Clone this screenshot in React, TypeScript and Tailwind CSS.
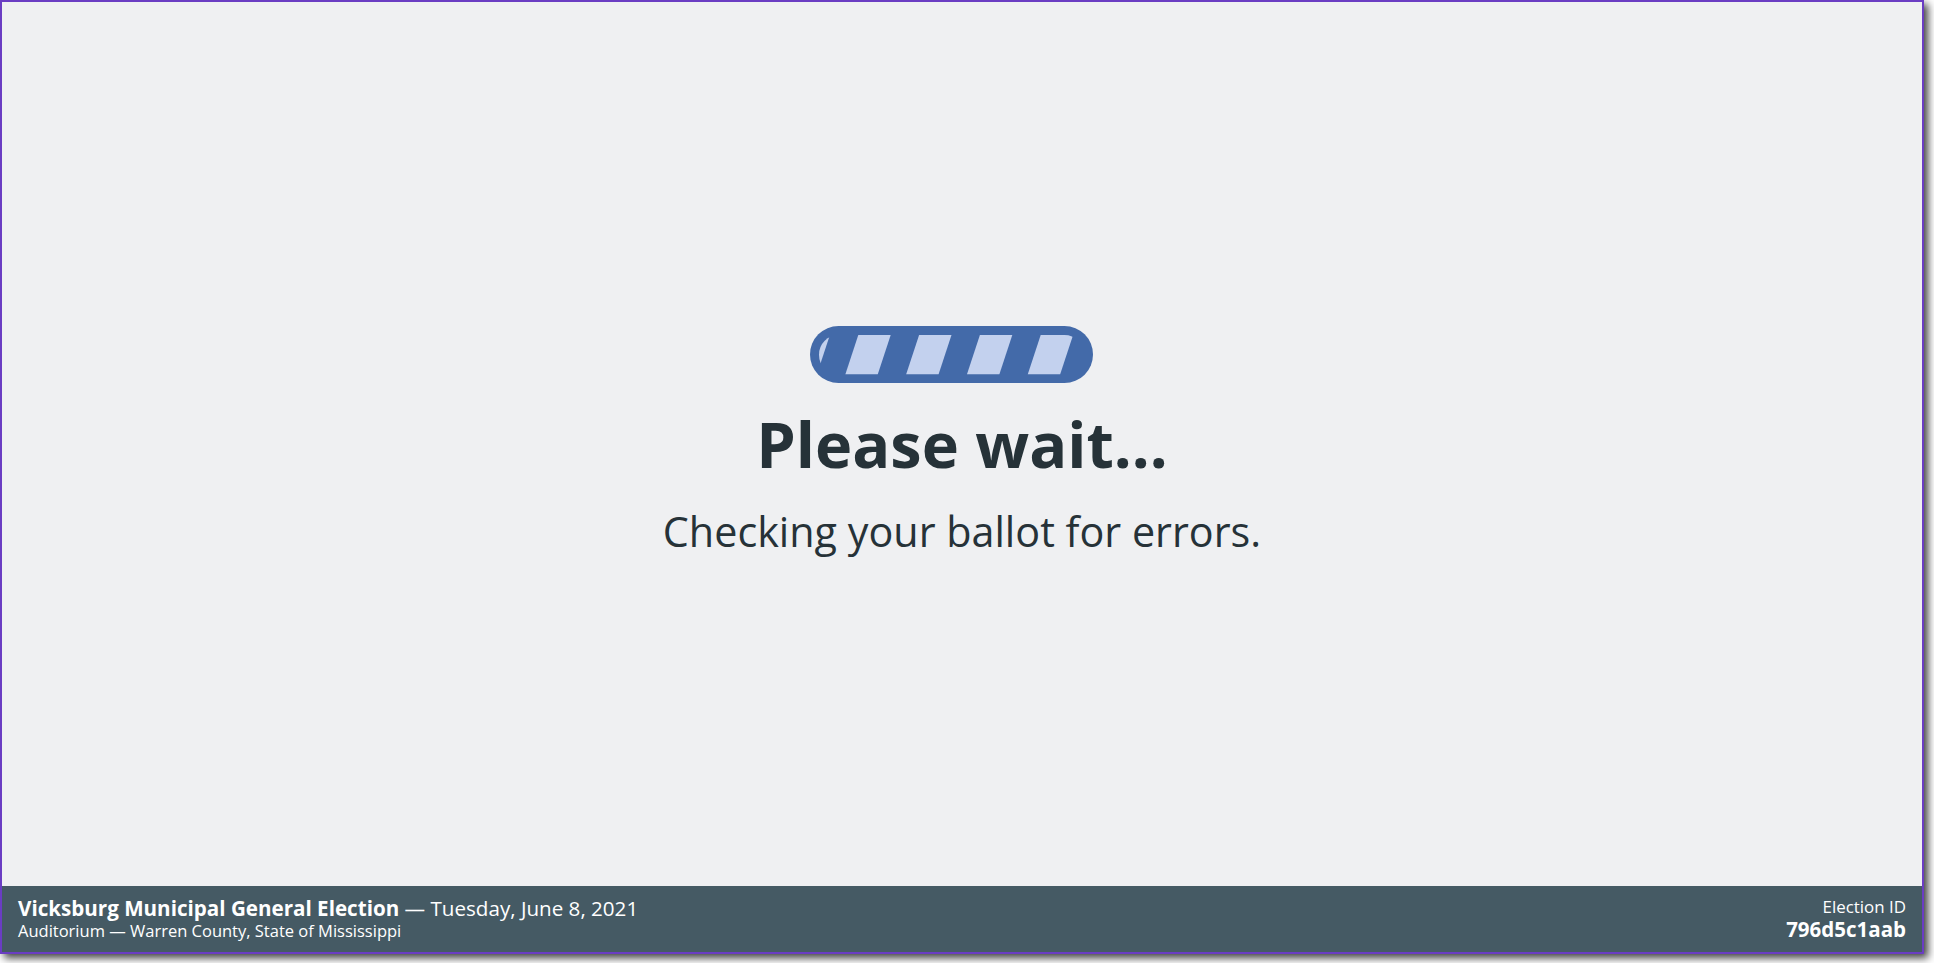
import React from "react";

function ProgressBar() {
  const stripes = [-12.5, 48.3, 109.1, 169.9, 230.7];
  return (
    <svg width="283" height="57" viewBox="0 0 283 57" aria-hidden="true" className="mr-[21px] block">
      <defs>
        <clipPath id="inner">
          <rect x="9" y="9" width="265" height="39.5" rx="19.5" />
        </clipPath>
      </defs>
      <rect x="0" y="0" width="283" height="57" rx="28.5" fill="#436aa9" />
      <g clipPath="url(#inner)">
        {stripes.map((x, i) => (
          <polygon
            key={i}
            points={`${x},9 ${x + 32.4},9 ${x + 19.4},48.5 ${x - 13},48.5`}
            fill="#c3d1ee"
          />
        ))}
      </g>
    </svg>
  );
}

export default function App() {
  return (
    <div className="w-[1934px] h-[963px] bg-white overflow-hidden" style={{ fontFamily: '"Open Sans", "Noto Sans", sans-serif' }}>
      <div className="w-[1924px] h-[954px] border-2 border-[#6a3dc3] shadow-[4px_4px_8px_rgba(0,0,0,0.75)] flex flex-col bg-[#eff0f2]">
        <main className="flex-1 flex flex-col items-center justify-center pb-[5px] text-[#263238]">
          <ProgressBar />
          <h1 className="mt-[23px] text-[63px] font-bold leading-[1.2]">Please wait...</h1>
          <p className="mt-[25px] text-[41.3px] leading-[1.2]">Checking your ballot for errors.</p>
        </main>
        <footer className="h-[66px] bg-[#455a64] text-white flex items-center justify-between px-4">
          <div className="flex flex-col">
            <div className="text-[20.6px] leading-[24px] whitespace-nowrap">
              <span className="font-bold">Vicksburg Municipal General Election</span> — Tuesday, June 8, 2021
            </div>
            <div className="text-[16.5px] leading-[22px] whitespace-nowrap">Auditorium — Warren County, State of Mississippi</div>
          </div>
          <div className="flex flex-col items-end">
            <div className="text-[16.9px] leading-[20px]">Election ID</div>
            <div className="text-[20.5px] leading-[24px] font-bold">796d5c1aab</div>
          </div>
        </footer>
      </div>
    </div>
  );
}
